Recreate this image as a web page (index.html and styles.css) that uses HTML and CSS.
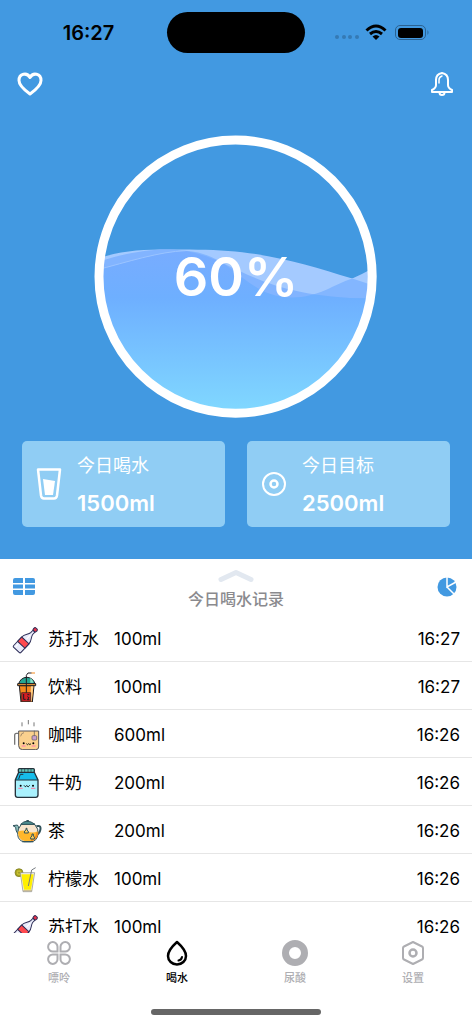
FILE: index.html
```html
<!DOCTYPE html>
<html lang="zh-CN">
<head>
  <meta charset="UTF-8">
  <meta name="viewport" content="width=device-width, initial-scale=1.0">
  <title>喝水</title>
  <link rel="stylesheet" href="styles.css">
</head>
<body>

  <!-- drink icons -->
  <svg class="sprites" aria-hidden="true">
    <symbol id="soda" viewBox="0 0 90 90">
      <g transform="rotate(43 42 47)" stroke="#2b2b55" stroke-width="3" stroke-linejoin="round">
        <path d="M38 12h8v10c1 10 11 14 11 28v35q0 4-4 4H31q-4 0-4-4V50c0-14 10-18 11-28z" fill="#e9ebfa"/>
        <path d="M27 50h30v18H27z" fill="#ff4a4f"/>
        <path d="M34 74v10M42 28v16" stroke="#fff"/>
        <rect x="36" y="1" width="12" height="11" rx="4" fill="#e8334a"/>
      </g>
    </symbol>
    <symbol id="juice" viewBox="0 0 90 90">
      <path d="M20 36a25 25 0 0 1 49 0z" fill="#25a592" stroke="#1c1c22" stroke-width="3"/>
      <path d="M55 17q8 6 9 15H55z" fill="#8ce0c9"/>
      <path d="M22 41h44l-5 49H27z" fill="#f58a1f" stroke="#1c1c22" stroke-width="3"/>
      <path d="M57 42h7l-5 46h-5z" fill="#ffd08a"/>
      <path d="M17 35h54v6H17z" fill="#f9a13c" stroke="#1c1c22" stroke-width="3"/>
      <path d="M29 62h27v26H29z" fill="#d51e23" stroke="#1c1c22" stroke-width="2"/>
      <path d="M35 66v16h6M46 68h6M46 74l5 3-5 6h6" fill="none" stroke="#1c1c22" stroke-width="3"/>
      <path d="M43 62V10l5-7h11" fill="none" stroke="#1c1c22" stroke-width="3"/>
      <path d="M58 3h11" stroke="#f58a1f" stroke-width="3"/>
    </symbol>
    <symbol id="coffee" viewBox="0 0 90 90">
      <path d="M30 7v12M49 0v13M66 7v12" stroke="#777" stroke-width="3"/>
      <path d="M20 40H13q-5 0-5 6v28" fill="none" stroke="#777" stroke-width="4"/>
      <path d="M20 33h60v48q0 8-9 8H32q-12 0-12-12z" fill="#fbd18e" stroke="#55555c" stroke-width="3"/>
      <path d="M26 49q1-10 10-11" fill="none" stroke="#77675a" stroke-width="2"/>
      <path d="M67 32v16" stroke="#55555c" stroke-width="2"/>
      <rect x="60" y="47" width="14" height="13" rx="3" fill="#c9a0ce" stroke="#55555c" stroke-width="2"/>
      <circle cx="35" cy="70" r="3"/><circle cx="64" cy="70" r="3"/>
      <path d="M43 71q4 6 7 0 4 6 7 0" fill="none" stroke="#222" stroke-width="3"/>
      <path d="M29 78h12M59 78h12" stroke="#ff93a5" stroke-width="5"/>
    </symbol>
    <symbol id="milk" viewBox="0 0 90 90">
      <path d="M20 13h47l11 24H10z" fill="#16bdea"/>
      <path d="M10 36h68v45q0 7-7 7H17q-7 0-7-7z" fill="#a9f1fd"/>
      <path d="M20 13L10 36v45q0 7 7 7h54q7 0 7-7V36L67 13z" fill="none" stroke="#25323b" stroke-width="4"/>
      <path d="M10 36h68M20 33l5-14h9" fill="none" stroke="#25323b" stroke-width="3"/>
      <rect x="19" y="2" width="48" height="11" rx="3" fill="#63c8bd" stroke="#25323b" stroke-width="4"/>
      <path d="M29 2v10M38 2v10M48 2v10M57 2v10" stroke="#25323b" stroke-width="2"/>
      <circle cx="26" cy="53" r="3"/><circle cx="63" cy="53" r="3"/>
      <path d="M36 52q4 8 8 1 5 7 9-1" fill="none" stroke="#111" stroke-width="3"/>
      <path d="M19 61h13M57 61h13" stroke="#f08fb0" stroke-width="4"/>
    </symbol>
    <symbol id="tea" viewBox="0 0 90 90">
      <path d="M73 31q17-5 11 14-3 10-13 12" fill="none" stroke="#31535c" stroke-width="6"/>
      <path d="M25 58Q11 51 11 34L3 29l13-2q4 3 5 14l6 5z" fill="#8fc0bd" stroke="#31535c" stroke-width="3"/>
      <path d="M28 25h40q13 14 10 30-3 21-21 22H37q-19-2-20-22-1-17 11-30z" fill="#f9e5cd" stroke="#31535c" stroke-width="3"/>
      <path d="M18 47q14-7 28-1 15 7 31 0-1 28-22 29H38Q18 71 18 47z" fill="#ffb72b"/>
      <path d="M57 73q18-4 19-24" fill="none" stroke="#f08d1f" stroke-width="6"/>
      <path d="M26 25q18-19 43 0z" fill="#4d8e91" stroke="#31535c" stroke-width="3"/>
      <rect x="43" y="12" width="8" height="6" rx="2" fill="#31535c"/>
      <path d="M42 37v5q-6 2-5 9h12q1-7-4-9v-5zM60 54v6q-6 3-4 9h11q2-7-3-9v-6z" fill="#ffd05c" stroke="#31535c" stroke-width="3"/>
      <path d="M31 77h33" stroke="#31535c" stroke-width="4"/>
    </symbol>
    <symbol id="lemon" viewBox="0 0 90 90">
      <circle cx="21" cy="26" r="12" fill="#a9a621" stroke="#77751c" stroke-width="2"/>
      <circle cx="21" cy="26" r="7" fill="#ded33b"/>
      <path d="M21 18v16M13 26h16M15 20l12 12M27 20L15 32" stroke="#77751c"/>
      <path d="M25 26h43l-9 57H33z" fill="#eee" stroke="#8b8b83" stroke-width="2"/>
      <path d="M28 31h37l-8 46H36z" fill="#ffef00"/>
      <path d="M49 66l10-48 12-7" fill="none" stroke="#777c82" stroke-width="3"/>
      <path d="M34 80h25" stroke="#b59b49" stroke-width="2"/>
    </symbol>
  </svg>

  <section class="hero">
    <div class="status-bar">
      <span class="clock">16:27</span>
      <span class="island"></span>
      <svg class="signals" viewBox="0 0 98 18" aria-hidden="true">
        <g fill="#357ab4"><circle cx="4" cy="13" r="2"/><circle cx="11" cy="13" r="2"/><circle cx="17" cy="13" r="2"/><circle cx="24" cy="13" r="2"/></g>
        <g fill="none" stroke="#000" stroke-width="3">
          <path d="M33.500 6.500q9.500-9 19 0M37 10q6-5 12 0"/>
        </g>
        <path d="M39.500 12.500q3.500-3 7 0L43 16z"/>
        <rect x="62.500" y="1.500" width="30" height="14" rx="4.500" fill="none" stroke="#2b6291"/>
        <rect x="65" y="4" width="25" height="10" rx="3"/>
        <path d="M94.500 6q2 2.500 0 5z" fill="#2b6291"/>
      </svg>
    </div>

    <div class="top-actions">
      <button class="icon-btn" aria-label="健康">
        <svg width="26" height="24" viewBox="0 0 26 24"><path d="M13 22C6 17 2 13 2 8.500 2 1.500 10 0 13 5.500 16 0 24 1.500 24 8.500 24 13 20 17 13 22z" fill="none" stroke="#fff" stroke-width="3" stroke-linejoin="round"/></svg>
      </button>
      <button class="icon-btn" aria-label="提醒">
        <svg width="24" height="24" viewBox="0 0 24 24" fill="none" stroke="#fff" stroke-width="2" stroke-linejoin="round"><path d="M2 20v-2q4-2 4-5V8q0-6 6-7 6 1 6 7v5q0 3 4 5v2z"/><path d="M9 11V8q0-3 3-4" stroke-width="1.500" stroke-linecap="round"/><path d="M9.500 20.500q0 2.500 2.500 2.500t2.500-2.500"/></svg>
      </button>
    </div>

    <div class="progress">
      <svg class="waves" viewBox="0 0 284 284" aria-hidden="true">
        <defs>
          <linearGradient id="water" gradientUnits="userSpaceOnUse" x1="0" y1="115" x2="0" y2="275">
            <stop offset="0" stop-color="#78acff"/>
            <stop offset=".3" stop-color="#6eafff"/>
            <stop offset="1" stop-color="#80d7ff"/>
          </linearGradient>
          <clipPath id="bowl"><circle cx="142" cy="142" r="135"/></clipPath>
          <clipPath id="front"><path d="M0 136C35 127 65 117 92 116c48 3 60 47 106 47 28 0 42-13 61-19q15-7 25-13v153H0z"/></clipPath>
        </defs>
        <g clip-path="url(#bowl)">
          <path d="M0 125C35 113 60 115 104 115c62 0 106 14 155 29q15 5 25 8v132H0z" fill="#a4caff"/>
          <path d="M0 136C35 127 65 117 92 116c48 3 60 47 106 47 28 0 42-13 61-19q15-7 25-13v153H0z" fill="#a4caff"/>
          <g clip-path="url(#front)">
            <path d="M0 125C35 113 60 115 104 115c62 0 106 14 155 29q15 5 25 8v132H0z" fill="#83b6ff"/>
          </g>
          <path d="M0 129C30 118 63 112 90 116c54 8 70 48 194 48v120H0z" fill="#82b4ff"/>
          <g clip-path="url(#front)">
            <path d="M0 129C30 118 63 112 90 116c54 8 70 48 194 48v120H0z" fill="url(#water)"/>
          </g>
          <path d="M0 164h284v120H0z" fill="url(#water)"/>
          <path d="M0 136C35 127 65 117 92 116" fill="none" stroke="#9bc4ff"/>
        </g>
        <circle cx="142" cy="142" r="137" fill="none" stroke="#fff" stroke-width="9"/>
      </svg>
      <span class="percent">60%</span>
    </div>

    <div class="cards">
      <div class="card">
        <svg width="28" height="34" viewBox="0 0 28 34"><path d="M3 2.500h22l-3 26q-.5 3-3 3H9q-2.500 0-3-3z" fill="none" stroke="#fff" stroke-width="2.500" stroke-linejoin="round"/><path d="M8 12l12 2-2 14h-8z" fill="#fff"/></svg>
        <div class="card-text">
          <span class="card-label">今日喝水</span>
          <strong class="card-value">1500ml</strong>
        </div>
      </div>
      <div class="card">
        <svg width="28" height="34" viewBox="0 0 28 34" fill="none" stroke="#fff"><circle cx="14" cy="17" r="11" stroke-width="2"/><circle cx="14" cy="17" r="3.500" stroke-width="2.500"/></svg>
        <div class="card-text">
          <span class="card-label">今日目标</span>
          <strong class="card-value">2500ml</strong>
        </div>
      </div>
    </div>
  </section>

  <main class="records">
    <div class="records-head">
      <button class="icon-btn" aria-label="表格">
        <svg width="22" height="18" viewBox="0 0 22 18" fill="#4299e1"><path d="M2 0h8v5H0V2q0-2 2-2zM12 0h8q2 0 2 2v3H12zM0 6.500h10v4H0zM12 6.500h10v4H12zM0 12h10v5H2q-2 0-2-2zM12 12h10v3q0 2-2 2h-8z"/></svg>
      </button>
      <div class="records-title">
        <svg width="36" height="14" viewBox="0 0 36 14"><path d="M3 10.500L18 3.500l15 7" fill="none" stroke="#e2e8f0" stroke-width="5" stroke-linecap="round" stroke-linejoin="round"/></svg>
        <h1>今日喝水记录</h1>
      </div>
      <button class="icon-btn" aria-label="统计">
        <svg width="20" height="20" viewBox="0 0 20 20"><circle cx="10" cy="10" r="9.500" fill="#4299e1"/><path d="M10 0v10l9-5M10 10l7 7" fill="none" stroke="#fff" stroke-width="1.500"/></svg>
      </button>
    </div>

    <table class="record-table" aria-label="今日喝水记录">
      <tbody>
        <tr><td class="icon"><svg><use href="#soda"/></svg></td><td class="name">苏打水</td><td>100ml</td><td class="time">16:27</td></tr>
        <tr><td class="icon"><svg><use href="#juice"/></svg></td><td class="name">饮料</td><td>100ml</td><td class="time">16:27</td></tr>
        <tr><td class="icon"><svg><use href="#coffee"/></svg></td><td class="name">咖啡</td><td>600ml</td><td class="time">16:26</td></tr>
        <tr><td class="icon"><svg><use href="#milk"/></svg></td><td class="name">牛奶</td><td>200ml</td><td class="time">16:26</td></tr>
        <tr><td class="icon"><svg><use href="#tea"/></svg></td><td class="name">茶</td><td>200ml</td><td class="time">16:26</td></tr>
        <tr><td class="icon"><svg><use href="#lemon"/></svg></td><td class="name">柠檬水</td><td>100ml</td><td class="time">16:26</td></tr>
        <tr><td class="icon"><svg><use href="#soda"/></svg></td><td class="name">苏打水</td><td>100ml</td><td class="time">16:26</td></tr>
      </tbody>
    </table>
  </main>

  <nav class="tab-bar">
    <div class="tabs">
      <a href="#" class="tab">
        <svg viewBox="0 0 26 26" fill="none" stroke="currentColor" stroke-width="2"><path d="M11.500 11.500H7a4.700 4.700 0 1 1 4.500-4.700zM14.500 11.500V6.800a4.700 4.700 0 1 1 4.500 4.700zM11.500 14.500v4.700A4.700 4.700 0 1 1 7 14.500zM14.500 14.500H19a4.700 4.700 0 1 1-4.500 4.700z"/></svg>
        <span>嘌呤</span>
      </a>
      <a href="#" class="tab active" aria-current="page">
        <svg viewBox="0 0 26 26" fill="none" stroke="currentColor" stroke-width="2.500" stroke-linejoin="round" stroke-linecap="round"><path d="M13 2Q4 10 4 16a9 8.500 0 0 0 18 0Q22 10 13 2z"/><path d="M14.500 20.500q3-.5 3.500-3.500" stroke-width="2"/></svg>
        <span>喝水</span>
      </a>
      <a href="#" class="tab">
        <svg viewBox="0 0 26 26" fill="none" stroke="currentColor"><circle cx="13" cy="13" r="9.500" stroke-width="7"/></svg>
        <span>尿酸</span>
      </a>
      <a href="#" class="tab">
        <svg viewBox="0 0 26 26" fill="none" stroke="currentColor" stroke-width="2" stroke-linejoin="round"><path d="M13 2l9 4.500q1 .5 1 1.500v10q0 1-1 1.500L13 24l-9-4.500Q3 19 3 18V8q0-1 1-1.500z"/><circle cx="13" cy="13" r="3.500" stroke-width="2.500"/></svg>
        <span>设置</span>
      </a>
    </div>
    <div class="home-indicator"></div>
  </nav>

</body>
</html>
```
FILE: styles.css
```css
* {
  box-sizing: border-box;
}

body {
  display: flex;
  flex-direction: column;
  height: 100vh;
  margin: 0;
  font-family: Inter, "Noto Sans CJK SC", sans-serif;
  color: #000;
  background: #fff;
  overflow: hidden;
}

svg {
  display: block;
}

.sprites {
  display: none;
}

.icon-btn {
  padding: 0;
  border: none;
  background: none;
  cursor: pointer;
}

/* top area */
.hero {
  flex: none;
  padding-bottom: 32px;
  background: #4299e1;
}

.status-bar {
  display: grid;
  grid-template-columns: 1fr 138px 1fr;
  align-items: center;
  height: 65px;
}

.clock {
  padding-left: 10px;
  font-size: 20px;
  font-weight: 600;
  text-align: center;
}

.island {
  height: 41px;
  border-radius: 21px;
  background: #000;
}

.signals {
  width: 98px;
  margin-left: 28px;
}

.top-actions {
  display: flex;
  justify-content: space-between;
  padding: 7px 18px 0 17px;
}

.progress {
  display: grid;
  place-items: center;
  width: 60%;
  margin: 39px auto 23px;
}

.waves,
.percent {
  grid-area: 1 / 1;
}

.waves {
  width: 100%;
}

.percent {
  color: #fff;
  font-size: 54px;
  font-weight: 600;
}

.cards {
  display: grid;
  grid-template-columns: 1fr 1fr;
  gap: 22px;
  padding: 0 22px;
}

.card {
  display: flex;
  align-items: center;
  gap: 14px;
  height: 86px;
  padding: 0 13px;
  border-radius: 5px;
  background: #90cdf4;
  color: #fff;
}

.card-text {
  display: flex;
  flex-direction: column;
  gap: 9px;
}

.card-label {
  font-size: 18px;
  line-height: 28px;
}

.card-value {
  font-size: 22px;
  font-weight: 600;
  line-height: 28px;
}

/* record list */
.records {
  flex: 1;
  min-height: 0;
  overflow: hidden;
}

.records-head {
  display: flex;
  justify-content: space-between;
  align-items: center;
  height: 55px;
  padding: 0 15px 0 13px;
}

.records-title {
  display: flex;
  flex-direction: column;
  align-items: center;
  gap: 4px;
  padding-top: 6px;
}

.records-title h1 {
  margin: 0;
  color: #8a8a8e;
  font-size: 16px;
  font-weight: 500;
  line-height: 24px;
}

.record-table {
  width: 100%;
  border-spacing: 0;
  font-size: 17px;
  line-height: 24px;
}

.record-table td {
  height: 48px;
  padding: 2px 0 0;
  border-bottom: 1px solid #e6e6e6;
}

.record-table .icon {
  width: 48px;
  padding-left: 12px;
}

.icon svg {
  width: 30px;
  height: 30px;
}

.record-table .name {
  width: 66px;
}

.record-table .time {
  padding-right: 12px;
  text-align: right;
}

/* bottom tabs */
.tab-bar {
  flex: none;
  padding-bottom: 9px;
  background: #fff;
}

.tabs {
  display: grid;
  grid-template-columns: repeat(4, 1fr);
  height: 76px;
  padding-top: 7px;
}

.tab {
  display: flex;
  flex-direction: column;
  align-items: center;
  gap: 4px;
  color: #aeaeb2;
  font-size: 11px;
  font-weight: 500;
  line-height: 16px;
  text-decoration: none;
}

.tab svg {
  width: 26px;
  height: 26px;
}

.tab.active {
  color: #000;
}

.home-indicator {
  width: 36%;
  height: 6px;
  margin: 0 auto;
  border-radius: 3px;
  background: #666;
}
```
